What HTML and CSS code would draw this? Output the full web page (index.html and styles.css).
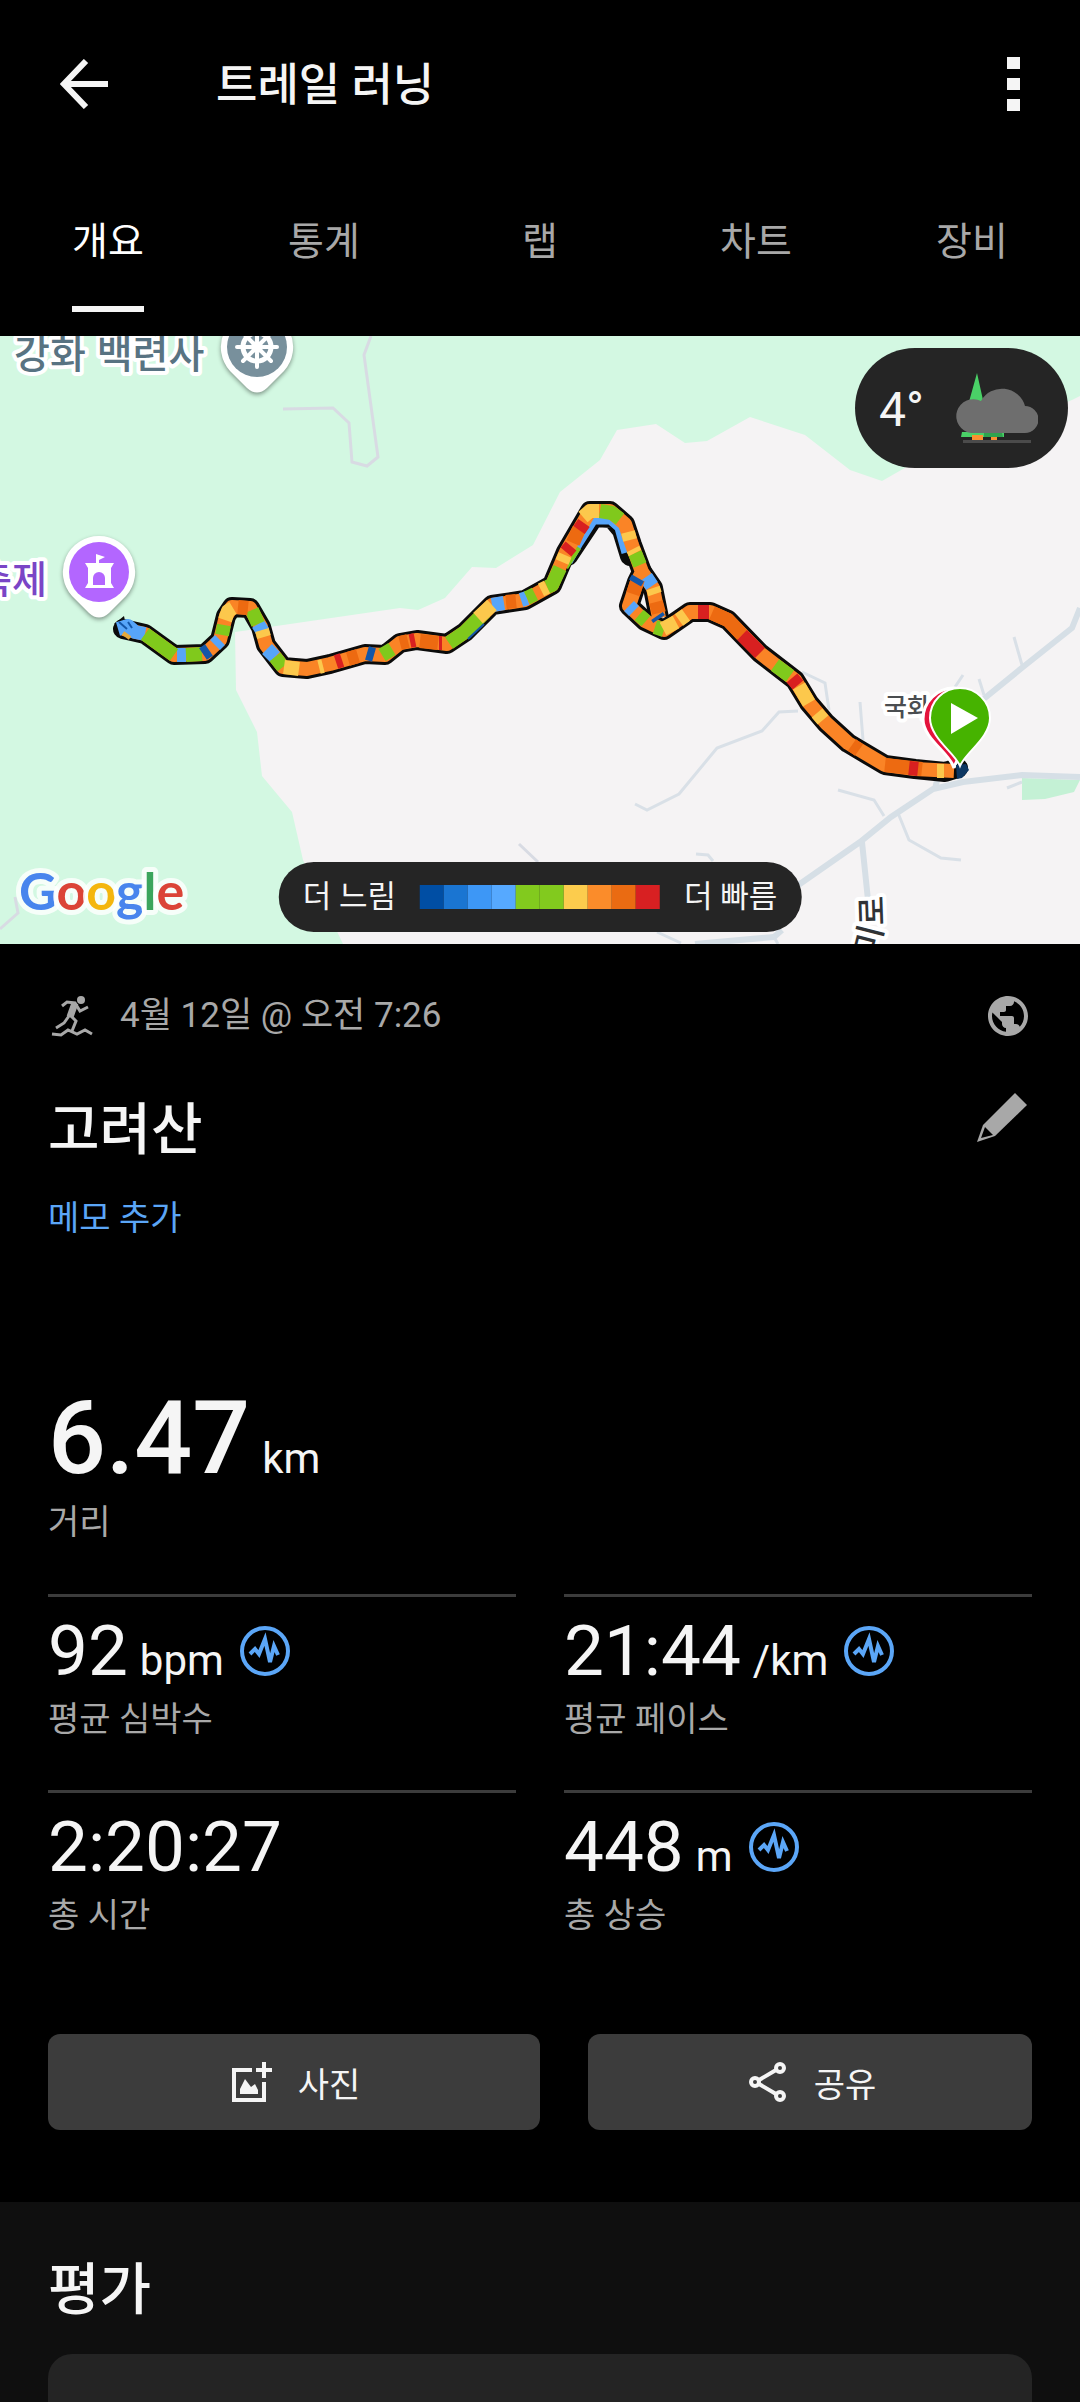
FILE: index.html
```html
<!DOCTYPE html>
<html lang="ko">
<head>
  <meta charset="utf-8">
  <meta name="viewport" content="width=device-width, initial-scale=1">
  <title>트레일 러닝</title>
  <link rel="stylesheet" href="styles.css">
</head>
<body>

  <header class="app-bar">
    <button class="icon-button" aria-label="뒤로">
      <svg width="48" height="50" viewBox="0 0 48 50" fill="none" stroke="#f5f5f5" stroke-width="6">
        <path d="M26 2 4 25 26 48M4 25h44"/>
      </svg>
    </button>
    <h1 class="app-title">트레일 러닝</h1>
    <button class="icon-button" aria-label="더보기">
      <svg width="13" height="54" viewBox="0 0 13 54" fill="#f5f5f5">
        <path d="M0 0h13v12H0zM0 21h13v12H0zM0 42h13v12H0z"/>
      </svg>
    </button>
  </header>

  <nav class="tabs">
    <button class="tab active"><span>개요</span></button>
    <button class="tab"><span>통계</span></button>
    <button class="tab"><span>랩</span></button>
    <button class="tab"><span>차트</span></button>
    <button class="tab"><span>장비</span></button>
  </nav>

  <section class="map">
    <svg class="map-canvas" viewBox="0 336 1080 608" preserveAspectRatio="xMidYMid slice">
      <!-- Forest -->
      <rect y="336" width="1080" height="608" fill="#f5f3f4"/>
      <path fill="#d3f8e2" d="M0 336H1080V396L1072 400 910 465 882 481 850 470 805 435 750 417 707 441 685 443 656 424 617 430 600 460 560 492 533 545 496 568 472 567 445 598 418 610 400 608 235 632 236 690 257 732 262 776 292 812 303 860 343 944H0z"/>
      <path fill="#c4f1d5" d="M1022 778 1080 780 1074 792 1045 799 1022 800z"/>

      <!-- Roads -->
      <g fill="none" stroke="#d8dbe3" stroke-width="3">
        <path d="M283 409 333 408 349 423 352 462 367 466 378 457 364 355 371 336M0 929 18 913 15 897M519 844 538 862"/>
      </g>
      <g fill="none" stroke="#d9e0e7" stroke-width="3">
        <path d="M802 672 825 683 829 710M798 711 779 712 762 731 717 748 679 794 647 810 635 804M860 702 863 740M838 790 874 800 884 816M898 813 909 840 941 858 961 860M1014 637 1022 665M963 675 955 687M979 679 984 695M1007 788 1022 782M696 854 708 855 713 861M657 932 681 943M774 937 778 944"/>
      </g>
      <g fill="none" stroke="#d6dfe6" stroke-width="6">
        <path d="M1080 608 1072 628 1023 667 975 706M1080 777 1022 775 963 782 933 789 891 817 860 842 774 902M862 842 868 900M774 937 695 944"/>
        <path d="M935 789 939 772M774 937 782 930"/>
      </g>

      <!-- Place names -->
      <g class="place">
        <text class="temple" x="14" y="368">강화 백련사</text>
        <text class="festival" x="47" y="593" text-anchor="end">축제</text>
        <text class="village" x="884" y="716">국화</text>
        <text class="road" transform="translate(884 925) rotate(-92)">로</text>
        <text class="road" transform="translate(876 957) rotate(-76)">미</text>
      </g>

      <!-- Place pins -->
      <g class="place-pin">
        <path fill="#fff" d="M257 311a36 36 0 0 1 27 60L267 388Q257 397 247 388L230 371A36 36 0 0 1 257 311z"/>
        <circle cx="257" cy="347" r="30" fill="#78909c"/>
        <circle cx="257" cy="347" r="14" fill="none" stroke="#fff" stroke-width="5"/>
        <circle cx="257" cy="347" r="6" fill="#fff"/>
        <path stroke="#fff" stroke-width="4" stroke-linecap="round" d="M257 327v14M257 353v14M237 347h14M263 347h14M243 333l10 10M271 333l-10 10M243 361l10-10M271 361l-10-10"/>
      </g>
      <g class="place-pin">
        <path fill="#fff" d="M99 536a36 36 0 0 1 27 60L109 613Q99 622 89 613L72 596A36 36 0 0 1 99 536z"/>
        <circle cx="99" cy="572" r="30" fill="#b366ff"/>
        <path fill="#fff" d="M96 554l9 3-6 3v3h15l-3 5v15l3 5H85l3-5v-15l-3-5h11z"/>
        <path fill="#b366ff" d="M93 585v-7a6 6 0 0 1 12 0v7z"/>
      </g>

      <!-- Track outline -->
      <g fill="none" stroke="#0b0b0b" stroke-width="20" stroke-linejoin="round">
        <path stroke-linecap="round" d="M123 629 145 634 174 655 205 654 220 640 226 616 232 607 250 608 261 627 266 645 283 667 307 669 330 664 365 654 385 655 400 643 417 640 447 644 465 632 492 605 525 600 552 585 566 552 590 511 610 511 625 524 632 545 642 572 637 582 629 606 645 621 664 630 690 612 710 612 728 620 760 653 795 680 809 703 826 723 848 743 885 765 915 769 945 772 958 768"/>
        <path d="M642 572 653 588 659 618"/>
        <path stroke-linecap="round" d="M568 556 594 517 612 518 622 530 630 556"/>
      </g>
      <path d="M114 624 124 616 127 630z" fill="#0b0b0b"/>

      <!-- Track pace -->
      <g fill="none" stroke-width="14" stroke-linejoin="round">
        <path stroke="#57a5fa" stroke-width="7" d="M569 562 580 543 594 521 610 521 618 528 625 553"/>
        <path stroke="#80c91c" stroke-width="7" d="M565 567 578 547"/>
        <path stroke="#fa8426" d="M123 629 145 634 174 655 205 654 220 640 226 616 232 607 250 608 261 627 266 645 283 667 307 669 330 664 365 654 385 655 400 643 417 640 447 644 465 632 492 605 525 600 552 585 566 552 590 511 610 511 625 524 632 545 642 572 637 582 629 606 645 621 664 630 690 612 710 612 728 620 760 653 795 680 809 703 826 723 848 743 885 765 915 769 954 771M642 572 653 588 659 618"/>
        <path stroke="#57a5fa" d="M118 629 128 626 135 632 145 634M177 655 186 655M215 645 220 640M258 624 263 632M267 649 275 657M492 605 504 603M521 600 527 598M629 606 634 611M646 577 652 586"/>
        <path stroke="#80c91c" d="M145 634 174 655M186 655 202 654M222 635 224 625M252 610 258 624M275 657 283 667M382 655 392 649M449 643 465 632 485 612M527 598 535 594M547 587 552 585 560 568M600 511 612 513 620 519M635 553 640 565M639 615 646 621M655 627 664 630M775 665 790 676"/>
        <path stroke="#fcc84c" d="M225 620 228 611 233 608M262 630 264 637M284 667 299 669M319 667 323 666M478 618 492 605M541 590 547 587M562 562 565 555M583 517 590 511 599 511M628 532 630 540M633 549 635 553M663 629 676 622M679 620 686 615M653 588 655 594M799 686 809 703M817 713 823 720M937 771 944 771"/>
        <path stroke="#ed6a11" d="M238 607 248 608M348 659 358 656M400 643 408 641M420 641 438 643M506 602 516 601M573 543 579 529M638 579 633 594M656 602 659 613M712 613 728 620 742 635M852 745 859 750M885 765 922 769"/>
        <path stroke="#d82020" d="M336 662 342 660M410 641 415 640M439 643 442 643M566 552 571 546M579 530 584 523M698 612 709 612M742 635 760 653M792 678 798 685M909 768 918 769"/>
        <path stroke="#1456a8" d="M203 654 209 650M367 653 374 655M638 578 635 583M657 616 659 619"/>
        <path stroke="#e5a93c" stroke-width="4" d="M123 633 130 638"/>
        <path stroke="#1456a8" stroke-width="2" d="M119 622 127 629M132 628 128 622M468 639 484 624"/>
      </g>

      <!-- Finish and start pins -->
      <path fill="#e4133c" stroke="#fff" stroke-width="3" d="M954 768C950 753 923 739 923 719A31 31 0 0 1 985 719C985 739 957 753 954 768z"/>
      <path fill="#0d3763" d="M956 765l10-1 3 6-7 8-5 1z"/>
      <path fill="#46b300" stroke="#fff" stroke-width="2" d="M960 766C955 753 930 738 930 718A30 30 0 0 1 990 718C990 738 965 753 960 766z"/>
      <path fill="#fff" d="M951 703v31l27-16z"/>

      <text class="google" x="19" y="910"><tspan fill="#4885ed">G</tspan><tspan fill="#db4437">o</tspan><tspan fill="#f4b60d">o</tspan><tspan fill="#4885ed">g</tspan><tspan fill="#3ba55c">l</tspan><tspan fill="#db4437">e</tspan></text>
    </svg>

    <div class="weather">
      <span>4°</span>
      <svg width="84" height="72" viewBox="0 0 84 72">
        <path fill="#4ad167" d="M23 0 31 36H13zM8 59h42v5H7z"/>
        <path fill="#2fa34e" d="M30 60h18l1 4H30z"/>
        <path fill="#fb9130" d="M18 62h11v5H18zM37 64h6v3h-6z"/>
        <path fill="#6e6e6e" d="M17 60a17 17 0 1 1 10-32A24 24 0 0 1 71 33a13 13 0 0 1 0 27z"/>
        <path fill="#4b4b4b" d="M9 67h68v3H9z"/>
      </svg>
    </div>

    <div class="legend">
      <span>더 느림</span>
      <div class="legend-scale">
        <i class="pace-1"></i>
        <i class="pace-2"></i>
        <i class="pace-3"></i>
        <i class="pace-4"></i>
        <i class="pace-5"></i>
        <i class="pace-5"></i>
        <i class="pace-6"></i>
        <i class="pace-7"></i>
        <i class="pace-8"></i>
        <i class="pace-9"></i>
      </div>
      <span>더 빠름</span>
    </div>
  </section>

  <main class="details">
    <div class="meta">
      <svg width="48" height="48" viewBox="0 0 48 48" fill="none" stroke="#a8a8a8" stroke-width="3">
        <circle cx="33" cy="8" r="4" fill="#a8a8a8" stroke="none"/>
        <path d="M14 14 19 10 27 11 32 19 40 15"/>
        <path stroke-width="7" d="M27 11 22 25"/>
        <path d="M21 22 28 29 24 39M21 24 16 31 8 36"/>
        <path d="M4 42 13 43 20 38 29 42 37 38 44 42"/>
      </svg>
      <span>4월 12일 @ 오전 7:26</span>
      <svg class="globe" width="48" height="48" viewBox="0 0 24 24" fill="#a8a8a8">
        <path d="M12 2C6.480 2 2 6.480 2 12s4.480 10 10 10 10-4.480 10-10S17.520 2 12 2zm-1 17.930c-3.950-.49-7-3.850-7-7.930 0-.62.080-1.210.21-1.790L9 15v1c0 1.100.9 2 2 2v1.930zm6.900-2.540c-.26-.81-1-1.390-1.900-1.390h-1v-3c0-.55-.45-1-1-1H8v-2h2c.55 0 1-.45 1-1V7h2c1.100 0 2-.9 2-2v-.41c2.930 1.190 5 4.060 5 7.410 0 2.080-.8 3.970-2.100 5.390z"/>
      </svg>
    </div>

    <div class="name-row">
      <h2>고려산</h2>
      <button class="icon-button" aria-label="이름 편집">
        <svg width="56" height="52" viewBox="0 0 56 52">
          <path fill="#a8a8a8" d="M39 1 51 13 19 44 1 50 7 33z"/>
          <path fill="#000" d="M9 35 17 43 5 46z"/>
        </svg>
      </button>
    </div>
    <a class="add-note" href="#">메모 추가</a>

    <div class="distance">
      <p class="value"><b>6.47</b> <span class="unit">km</span></p>
      <p class="label">거리</p>
    </div>

    <div class="stats">
      <div class="stat">
        <p class="value">92 <span class="unit">bpm</span>
          <svg class="pulse" width="50" height="50" viewBox="0 0 50 50"><circle cx="25" cy="25" r="23"/><path d="M10 28 15 23 19 28 25 13 30 36 34 20 38 29"/></svg>
        </p>
        <p class="label">평균 심박수</p>
      </div>
      <div class="stat">
        <p class="value">21:44 <span class="unit">/km</span>
          <svg class="pulse" width="50" height="50" viewBox="0 0 50 50"><circle cx="25" cy="25" r="23"/><path d="M10 28 15 23 19 28 25 13 30 36 34 20 38 29"/></svg>
        </p>
        <p class="label">평균 페이스</p>
      </div>
      <div class="stat">
        <p class="value">2:20:27</p>
        <p class="label">총 시간</p>
      </div>
      <div class="stat">
        <p class="value">448 <span class="unit">m</span>
          <svg class="pulse" width="50" height="50" viewBox="0 0 50 50"><circle cx="25" cy="25" r="23"/><path d="M10 28 15 23 19 28 25 13 30 36 34 20 38 29"/></svg>
        </p>
        <p class="label">총 상승</p>
      </div>
    </div>

    <div class="actions">
      <button>
        <svg width="42" height="42" viewBox="0 0 42 42" fill="none" stroke="#f5f5f5" stroke-width="4">
          <path d="M20 9H2v30h30V21M32 1v16M24 9h16"/>
          <path fill="#f5f5f5" stroke="none" d="M8 33V28l5-10 6 8 4-3 3 6v4z"/>
        </svg>
        사진
      </button>
      <button>
        <svg width="42" height="42" viewBox="0 0 42 42" fill="none" stroke="#f5f5f5" stroke-width="4">
          <circle cx="7" cy="21" r="4"/>
          <circle cx="32" cy="7" r="4"/>
          <circle cx="32" cy="35" r="4"/>
          <path d="M11 19 28 9M11 23 28 33"/>
        </svg>
        공유
      </button>
    </div>
  </main>

  <section class="rating">
    <h2>평가</h2>
    <div class="rating-card"></div>
  </section>

</body>
</html>
```

FILE: styles.css
```css
* {
  box-sizing: border-box;
}

body {
  margin: 0;
  background-color: #000;
  color: #f5f5f5;
  font-family: Roboto, "Noto Sans CJK KR", sans-serif;
}

h1, h2, p {
  margin: 0;
  font-weight: 500;
}

button {
  background: none;
  border: 0;
  padding: 0;
  color: inherit;
  font: inherit;
  cursor: pointer;
}

svg {
  display: block;
  flex-shrink: 0;
}

.app-bar {
  display: flex;
  align-items: center;
  height: 168px;
  padding: 0 60px;
}

.app-title {
  flex: 1;
  margin-left: 108px;
  padding-top: 4px;
  font-size: 45px;
  line-height: 60px;
}

.tabs {
  display: grid;
  grid-template-columns: repeat(5, 1fr);
  padding: 44px 0 24px;
}

.tab {
  display: flex;
  justify-content: center;
  color: #a8a8a8;
  font-size: 39px;
  line-height: 60px;
}

.tab span {
  padding-bottom: 34px;
  border-bottom: 6px solid transparent;
}

.tab.active span {
  color: #fff;
  border-color: #f5f5f5;
}

/* Map */
.map {
  position: relative;
  height: 608px;
  overflow: hidden;
}

.map-canvas {
  width: 100%;
  height: 100%;
}

.place text {
  font-family: "Noto Sans CJK KR", sans-serif;
  font-weight: 500;
  stroke: #fff;
  stroke-width: 8px;
  stroke-linejoin: round;
  paint-order: stroke;
}

.place .temple {
  font-size: 39px;
  fill: #587382;
}

.place .festival {
  font-size: 38px;
  fill: #7a45c6;
}

.place .village {
  font-size: 25px;
  fill: #4a4d50;
}

.place .road {
  font-size: 32px;
  fill: #303336;
}

.place-pin {
  filter: drop-shadow(0 2px 2px #0006);
}

.google {
  font-family: Lato, sans-serif;
  font-size: 52px;
  font-weight: 700;
  stroke: #fffc;
  stroke-width: 10px;
  stroke-linejoin: round;
  paint-order: stroke;
}

.weather {
  position: absolute;
  top: 12px;
  right: 12px;
  display: flex;
  align-items: center;
  gap: 30px;
  height: 120px;
  padding: 2px 30px 0 24px;
  border-radius: 60px;
  background-color: #252525;
  font-size: 48px;
}

.legend {
  position: absolute;
  bottom: 12px;
  left: 50%;
  transform: translateX(-50%);
  display: flex;
  align-items: center;
  gap: 24px;
  height: 70px;
  padding: 0 24px;
  border-radius: 35px;
  background-color: #252525;
  font-size: 31px;
  line-height: 36px;
  white-space: nowrap;
}

.legend-scale {
  display: flex;
}

.legend-scale i {
  width: 24px;
  height: 24px;
}

.pace-1 { background-color: #004ea4; }
.pace-2 { background-color: #1a75d2; }
.pace-3 { background-color: #3d97f6; }
.pace-4 { background-color: #56a9ff; }
.pace-5 { background-color: #82ca1e; }
.pace-6 { background-color: #fccc4d; }
.pace-7 { background-color: #fb8c2a; }
.pace-8 { background-color: #ea6b12; }
.pace-9 { background-color: #d82022; }

/* Activity details */
.details {
  padding: 48px 48px 72px;
}

.meta {
  display: flex;
  align-items: center;
  gap: 24px;
  color: #a8a8a8;
  font-size: 35px;
  line-height: 48px;
}

.globe {
  margin-left: auto;
}

.name-row {
  display: flex;
  justify-content: space-between;
  align-items: flex-start;
  margin-top: 52px;
}

.name-row h2, .rating h2 {
  padding-top: 2px;
  font-size: 56px;
  line-height: 72px;
}

.add-note {
  display: block;
  margin-top: 28px;
  color: #5ba6f7;
  font-size: 34px;
  line-height: 48px;
  text-decoration: none;
}

.distance {
  margin: 148px 0 48px;
}

.distance .value {
  font-size: 102px;
  line-height: 96px;
}

.distance b {
  font-weight: 500;
}

.distance .label {
  margin-top: 12px;
}

.value {
  display: flex;
  align-items: baseline;
  gap: 12px;
  font-weight: 400;
}

.unit {
  font-size: 42px;
  line-height: 48px;
}

.label {
  color: #a8a8a8;
  font-size: 34px;
  font-weight: 400;
  line-height: 48px;
}

.stats {
  display: grid;
  grid-template-columns: 1fr 1fr;
  column-gap: 48px;
  row-gap: 47px;
}

.stat {
  border-top: 3px solid #3c3c3c;
  padding-top: 18px;
}

.stat .value {
  font-size: 71px;
  line-height: 72px;
}

.stat .label {
  margin-top: 8px;
}

.pulse {
  align-self: center;
  margin-left: 4px;
  fill: none;
  stroke: #5ba6f7;
  stroke-width: 4px;
}

.actions {
  display: grid;
  grid-template-columns: 41fr 37fr;
  gap: 48px;
  margin-top: 95px;
}

.actions button {
  display: flex;
  align-items: center;
  justify-content: center;
  gap: 24px;
  height: 96px;
  padding-left: 4px;
  border-radius: 12px;
  background-color: #3c3c3c;
  font-size: 34px;
}

.rating {
  padding: 50px 48px 0;
  background-color: #0f0f0f;
}

.rating-card {
  height: 48px;
  margin-top: 28px;
  border-radius: 24px 24px 0 0;
  background-color: #242424;
}
```
